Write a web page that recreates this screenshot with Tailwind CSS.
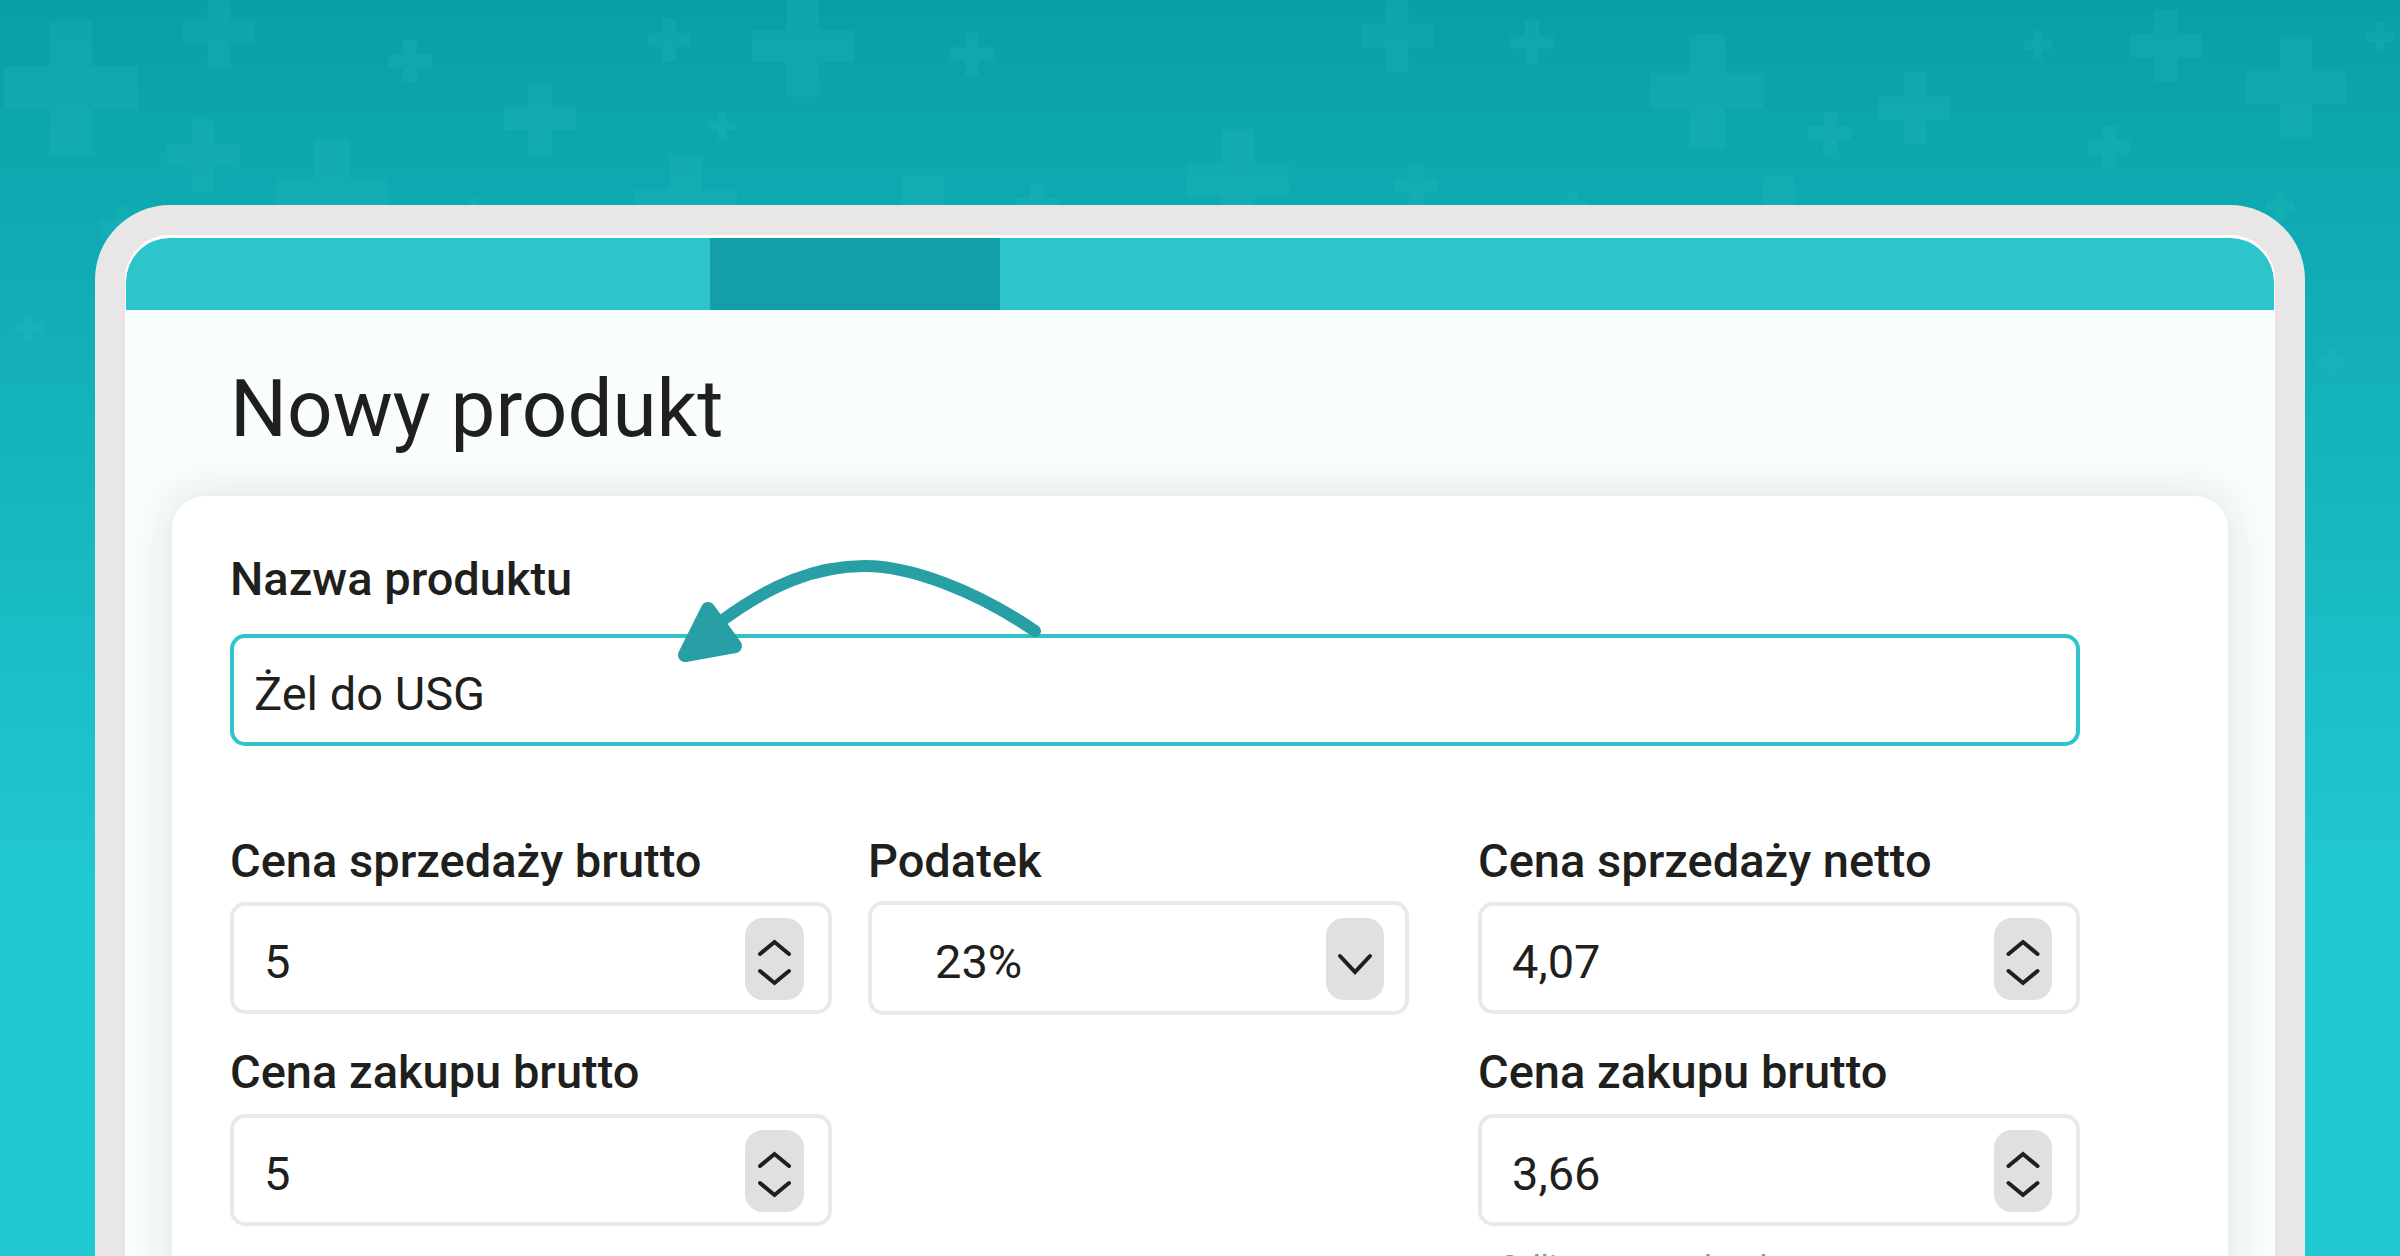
<!DOCTYPE html>
<html lang="pl">
<head>
<meta charset="utf-8">
<title>Nowy produkt</title>
<script src="https://cdn.jsdelivr.net/npm/@tailwindcss/browser@4"></script>
</head>
<body class="m-0">
<div class="relative h-[1256px] w-[2400px] overflow-hidden bg-linear-to-b from-[#08a0a7] to-[#20c8d1] to-70% font-['Roboto',sans-serif] text-[#1f1f1e]">

  <!-- background plus signs -->
  <svg class="absolute inset-0" width="2400" height="1256" viewBox="0 0 2400 1256" fill="#2ec4cc" fill-opacity="0.17">
    <defs><path id="plus" d="M-16-50h32v34h34v32h-34v34h-32v-34h-34v-32h34z"/></defs>
    <use href="#plus" transform="translate(71 88) scale(1.34)"/>
    <use href="#plus" transform="translate(219 32) scale(.72)"/>
    <use href="#plus" transform="translate(410 61) scale(.43)"/>
    <use href="#plus" transform="translate(669 40) scale(.43)"/>
    <use href="#plus" transform="translate(803 46) scale(1.02)"/>
    <use href="#plus" transform="translate(972 54) scale(.43)"/>
    <use href="#plus" transform="translate(540 119) scale(.72)"/>
    <use href="#plus" transform="translate(722 126) scale(.28)"/>
    <use href="#plus" transform="translate(203 155) scale(.72)"/>
    <use href="#plus" transform="translate(332 196) scale(1.12)"/>
    <use href="#plus" transform="translate(686 206) scale(1.02)"/>
    <use href="#plus" transform="translate(923 242) scale(1.34)"/>
    <use href="#plus" transform="translate(474 212) scale(.28)"/>
    <use href="#plus" transform="translate(1037 205) scale(.43)"/>
    <use href="#plus" transform="translate(1238 180) scale(1.02)"/>
    <use href="#plus" transform="translate(122 228) scale(.43)"/>
    <use href="#plus" transform="translate(29 328) scale(.28)"/>
    <use href="#plus" transform="translate(1397 36) scale(.72)"/>
    <use href="#plus" transform="translate(1532 42) scale(.43)"/>
    <use href="#plus" transform="translate(1707 91) scale(1.13)"/>
    <use href="#plus" transform="translate(1915 108) scale(.72)"/>
    <use href="#plus" transform="translate(1830 133) scale(.43)"/>
    <use href="#plus" transform="translate(2038 45) scale(.29)"/>
    <use href="#plus" transform="translate(2166 46) scale(.72)"/>
    <use href="#plus" transform="translate(2296 87) scale(1.01)"/>
    <use href="#plus" transform="translate(2109 147) scale(.43)"/>
    <use href="#plus" transform="translate(2380 37) scale(.29)"/>
    <use href="#plus" transform="translate(1416 186) scale(.43)"/>
    <use href="#plus" transform="translate(1573 206) scale(.29)"/>
    <use href="#plus" transform="translate(1779 226) scale(1.01)"/>
    <use href="#plus" transform="translate(2280 206) scale(.29)"/>
    <use href="#plus" transform="translate(2331 362) scale(.28)"/>
  </svg>

  <div class="relative pt-[205px] pl-[95px]">
    <!-- device frame -->
    <div class="h-[1200px] w-[2210px] rounded-t-[75px] border-[30px] border-b-0 border-[#e8e6e7] bg-white">
      <div class="h-full rounded-t-[45px] bg-white pt-[3px]">
        <!-- tab bar -->
        <div class="mx-px flex h-[72px] rounded-t-[44px] bg-[#2ec4cc]">
          <div class="ml-[584px] w-[290px] bg-[#149fa8]"></div>
        </div>
        <div class="h-full bg-[#f9fdfd] px-[47px]">
          <h1 class="ml-[58px] pt-[59px] pb-[47px] text-[80px] leading-[80px] font-normal">Nowy produkt</h1>

          <!-- card -->
          <div class="h-[900px] rounded-[33px] bg-white pt-[57px] pr-[148px] pl-[58px] shadow-[0_0_45px_rgba(0,30,40,0.13)]">
            <label class="block h-[52px] text-[47px] leading-[52px] font-medium">Nazwa produktu</label>
            <div class="mt-[29px] flex h-[112px] items-center rounded-[15px] border-4 border-[#2ec4cc] pl-[20px] text-[47px]">
              <span class="pt-[7px] leading-[52px]">Żel do USG</span>
            </div>

            <div class="mt-[89px] flex">
              <!-- column 1 -->
              <div class="w-[602px]">
                <label class="block h-[52px] text-[47px] leading-[52px] font-medium">Cena sprzedaży brutto</label>
                <div class="mt-[15px] flex h-[112px] items-center justify-between rounded-[15px] border-4 border-[#e8e8ee] pr-[24px] pl-[30px] text-[47px]">
                  <span class="pt-[7px] leading-[52px]">5</span>
                  <div class="mt-[2px] h-[82px] w-[59px] rounded-[18px] bg-[#e0e0e0]">
                    <svg width="59" height="82" viewBox="0 0 59 82" fill="none" stroke="#1f1f1e" stroke-width="4" stroke-linecap="round"><path d="M15 36 29.5 24 44 36"/><path d="M15 53 29.5 65 44 53"/></svg>
                  </div>
                </div>
                <label class="mt-[32px] block h-[52px] text-[47px] leading-[52px] font-medium">Cena zakupu brutto</label>
                <div class="mt-[16px] flex h-[112px] items-center justify-between rounded-[15px] border-4 border-[#e8e8ee] pr-[24px] pl-[30px] text-[47px]">
                  <span class="pt-[7px] leading-[52px]">5</span>
                  <div class="mt-[2px] h-[82px] w-[59px] rounded-[18px] bg-[#e0e0e0]">
                    <svg width="59" height="82" viewBox="0 0 59 82" fill="none" stroke="#1f1f1e" stroke-width="4" stroke-linecap="round"><path d="M15 36 29.5 24 44 36"/><path d="M15 53 29.5 65 44 53"/></svg>
                  </div>
                </div>
              </div>

              <!-- column 2 -->
              <div class="ml-[36px] w-[541px]">
                <label class="block h-[52px] text-[47px] leading-[52px] font-medium">Podatek</label>
                <div class="mt-[14px] flex h-[114px] items-center justify-between rounded-[15px] border-4 border-[#e8e8ee] pr-[21px] pl-[63px] text-[47px]">
                  <span class="pt-[7px] leading-[52px]">23%</span>
                  <div class="mt-[2px] h-[82px] w-[58px] rounded-[18px] bg-[#e0e0e0]">
                    <svg width="58" height="82" viewBox="0 0 58 82" fill="none" stroke="#1f1f1e" stroke-width="4" stroke-linecap="round"><path d="M14 38 29 54 44 38"/></svg>
                  </div>
                </div>
              </div>

              <!-- column 3 -->
              <div class="ml-[69px] w-[602px]">
                <label class="block h-[52px] text-[47px] leading-[52px] font-medium">Cena sprzedaży netto</label>
                <div class="mt-[15px] flex h-[112px] items-center justify-between rounded-[15px] border-4 border-[#e8e8ee] pr-[24px] pl-[30px] text-[47px]">
                  <span class="pt-[7px] leading-[52px]">4,07</span>
                  <div class="mt-[2px] h-[82px] w-[58px] rounded-[18px] bg-[#e0e0e0]">
                    <svg width="58" height="82" viewBox="0 0 58 82" fill="none" stroke="#1f1f1e" stroke-width="4" stroke-linecap="round"><path d="M14.5 36 29 24 43.5 36"/><path d="M14.5 53 29 65 43.5 53"/></svg>
                  </div>
                </div>
                <label class="mt-[32px] block h-[52px] text-[47px] leading-[52px] font-medium">Cena zakupu brutto</label>
                <div class="mt-[16px] flex h-[112px] items-center justify-between rounded-[15px] border-4 border-[#e8e8ee] pr-[24px] pl-[30px] text-[47px]">
                  <span class="pt-[7px] leading-[52px]">3,66</span>
                  <div class="mt-[2px] h-[82px] w-[58px] rounded-[18px] bg-[#e0e0e0]">
                    <svg width="58" height="82" viewBox="0 0 58 82" fill="none" stroke="#1f1f1e" stroke-width="4" stroke-linecap="round"><path d="M14.5 36 29 24 43.5 36"/><path d="M14.5 53 29 65 43.5 53"/></svg>
                  </div>
                </div>
                <p class="mt-[21px] ml-[20px] text-[34px] leading-[40px] text-[#8f8f8f]">Odliczony podatek</p>
              </div>
            </div>
          </div>
        </div>
      </div>
    </div>
  </div>

  <!-- annotation arrow -->
  <svg class="absolute inset-0" width="2400" height="1256" viewBox="0 0 2400 1256" fill="none" stroke="#279fa5" stroke-linecap="round" stroke-linejoin="round">
    <path stroke-width="12" d="M1035 631C975 590 910 566 865 566 815 566 770 585 720 622"/>
    <path stroke-width="14" fill="#279fa5" d="M708 609 735 646 685 655Z"/>
  </svg>
</div>
</body>
</html>
